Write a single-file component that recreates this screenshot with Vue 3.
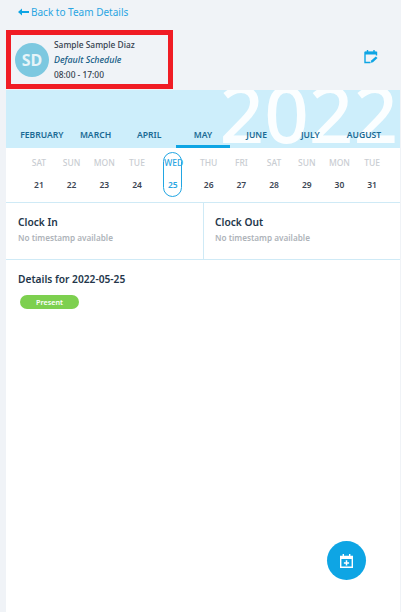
<script setup>
const months = ['FEBRUARY', 'MARCH', 'APRIL', 'MAY', 'JUNE', 'JULY', 'AUGUST']
const days = [
  ['SAT', 21], ['SUN', 22], ['MON', 23], ['TUE', 24], ['WED', 25], ['THU', 26],
  ['FRI', 27], ['SAT', 28], ['SUN', 29], ['MON', 30], ['TUE', 31]
]
</script>

<template>
  <div class="page">
    <a class="back">
      <svg class="back-icon" width="11" height="8" viewBox="0 0 11 8"><path d="M0 4 L4 0.5 V3 H11 V5 H4 V7.5 Z" fill="#0ea5e4" /></svg>
      <span>Back to Team Details</span>
    </a>
    <div class="head">
      <div class="profile">
        <div class="avatar">SD</div>
        <div class="info">
          <div class="name">Sample Sample Diaz</div>
          <div class="schedule">Default Schedule</div>
          <div class="time">08:00 - 17:00</div>
        </div>
      </div>
      <svg class="edit-icon" width="14" height="15" viewBox="0 0 14 15" fill="none">
        <path d="M6.5 13.5H1V3.5H12.5V6.5" stroke="#0ea5e4" stroke-width="1.4" />
        <path d="M1 2.5H12.5V5.5H1Z" fill="#0ea5e4" />
        <path d="M3.5 1V3M10 1V3" stroke="#0ea5e4" stroke-width="1.4" />
        <path d="M6.8 13.7L7.2 11.6L11.8 7.4L13.5 9L9 13.2Z" fill="#0ea5e4" />
      </svg>
    </div>
    <main class="main">
      <div class="band">
        <div class="year">2022</div>
        <div class="months">
          <div v-for="m in months" :key="m" class="month" :class="{ active: m === 'MAY' }">{{ m }}</div>
        </div>
      </div>
      <div class="days">
        <div v-for="d in days" :key="d[1]" class="day" :class="{ selected: d[1] === 25 }">
          <div class="dow">{{ d[0] }}</div>
          <div class="num">{{ d[1] }}</div>
        </div>
      </div>
      <div class="clocks">
        <div class="clock">
          <div class="clock-title">Clock In</div>
          <div class="clock-note">No timestamp available</div>
        </div>
        <div class="clock">
          <div class="clock-title">Clock Out</div>
          <div class="clock-note">No timestamp available</div>
        </div>
      </div>
      <div class="details">
        <div class="details-title">Details for 2022-05-25</div>
        <span class="badge">Present</span>
      </div>
      <button class="fab">
        <svg width="13" height="14" viewBox="0 0 13 14" fill="none">
          <path d="M0.7 2.5H12.3V13.3H0.7Z" stroke="#fff" stroke-width="1.4" />
          <path d="M1 2.5H12V5H1Z" fill="#fff" />
          <path d="M3.3 0V2.5M9.7 0V2.5" stroke="#fff" stroke-width="1.4" />
          <path d="M6.5 6.3V11.5M3.9 8.9H9.1" stroke="#fff" stroke-width="1.5" />
        </svg>
      </button>
    </main>
  </div>
</template>

<style>
html, body { margin: 0; background: #f0f3f7; }
</style>

<style scoped>
.page {
  width: 401px;
  height: 612px;
  overflow: hidden;
  display: flex;
  flex-direction: column;
  font-family: "Noto Sans", sans-serif;
  background: #f0f3f7;
  box-sizing: border-box;
}
.back {
  display: flex;
  align-items: center;
  gap: 2px;
  height: 24px;
  padding-left: 18px;
  font-size: 10px;
  color: #2aa5e2;
}
.head {
  height: 66px;
  display: flex;
  align-items: center;
  justify-content: space-between;
  padding: 0 23px 0 6px;
}
.edit-icon { margin-bottom: 2px; }
.profile {
  box-sizing: border-box;
  width: 167px;
  height: 59px;
  margin-top: 5px;
  border: 5px solid #f01c24;
  display: flex;
  align-items: center;
  gap: 5px;
  padding-left: 4px;
}
.avatar {
  width: 34px;
  height: 34px;
  border-radius: 50%;
  background: #7cc8e0;
  color: #e6f4f8;
  display: flex;
  align-items: center;
  justify-content: center;
  font-size: 16px;
  font-weight: 700;
}
.info {
  display: flex;
  flex-direction: column;
  gap: 2px;
  margin-top: -1px;
  font-size: 8.4px;
  line-height: 13px;
  font-weight: 500;
  color: #33404d;
}
.schedule {
  font-size: 8.9px;
  font-style: italic;
  color: #135b85;
}
.main {
  position: relative;
  flex: 1;
  margin-left: 6px;
  margin-right: 1px;
  background: #fff;
}
.band {
  position: relative;
  height: 58px;
  background: #cdeefb;
  overflow: hidden;
}
.year {
  position: absolute;
  right: 2px;
  top: -32px;
  font-size: 78px;
  line-height: 110px;
  font-weight: 500;
  color: #fbfeff;
}
.months {
  position: absolute;
  left: 9px;
  bottom: 0;
  display: flex;
}
.month {
  box-sizing: border-box;
  width: 53.7px;
  height: 22px;
  padding-top: 3px;
  text-align: center;
  font-size: 8.6px;
  font-weight: 600;
  color: #1a6a94;
}
.month.active { border-bottom: 3px solid #0ea5e4; }
.days {
  box-sizing: border-box;
  height: 55px;
  padding: 4px 0 0 16.6px;
  display: flex;
  border-bottom: 1px solid #cfeaf6;
}
.day {
  width: 32.7px;
  height: 45px;
  box-sizing: border-box;
  text-align: center;
  font-size: 8.5px;
  font-weight: 500;
}
.dow {
  color: #c9cdd2;
  line-height: 12px;
  padding-top: 5px;
}
.num {
  color: #3c4654;
  font-weight: 600;
  line-height: 12px;
  margin-top: 10px;
}
.day.selected {
  border: 1px solid #22a6e3;
  border-radius: 10px;
  width: 19px;
  margin: 0 10px;
}
.day.selected .dow {
  color: #2aa5e2;
  padding-top: 4px;
  white-space: nowrap;
}
.day.selected .num { color: #2aa5e2; }
.clocks {
  display: flex;
  height: 57px;
  box-sizing: border-box;
  border-bottom: 1px solid #cfeaf6;
}
.clock {
  flex: 1;
  padding: 12px 0 0 12px;
}
.clock + .clock { border-left: 1px solid #cfeaf6; padding-left: 11px; }
.clock-title {
  font-size: 10.2px;
  line-height: 14px;
  font-weight: 600;
  color: #23364a;
}
.clock-note {
  margin-top: 3px;
  font-size: 8.2px;
  line-height: 12px;
  font-weight: 600;
  color: #aeb3b9;
}
.details { padding: 12px 12px 0; }
.details-title {
  font-size: 10.2px;
  line-height: 14px;
  font-weight: 600;
  color: #23364a;
}
.badge {
  display: block;
  width: 59px;
  height: 14px;
  margin: 9px 0 0 2px;
  border-radius: 7px;
  background: #7dd04f;
  color: #fff;
  font-size: 7.2px;
  line-height: 14px;
  font-weight: 600;
  text-align: center;
}
.fab {
  position: absolute;
  left: 321px;
  top: 451px;
  width: 39px;
  height: 39px;
  border: 0;
  padding: 0;
  border-radius: 50%;
  background: #0ea5e4;
  display: flex;
  align-items: center;
  justify-content: center;
}
</style>
